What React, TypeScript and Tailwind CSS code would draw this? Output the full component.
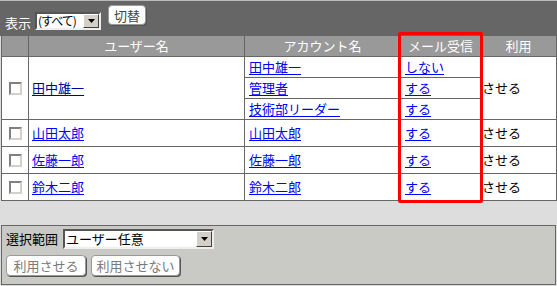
import React from "react";

const font = { fontFamily: '"Noto Sans CJK JP", "Liberation Sans", sans-serif' };

function Select({ label, className, textClass }: { label: string; className: string; textClass: string }) {
  return (
    <div
      className={`flex items-stretch bg-white border-2 border-t-[#555] border-l-[#555] border-b-[#eee] border-r-[#eee] ${className}`}
    >
      <span className={`flex-1 whitespace-nowrap pl-[1px] leading-none flex items-center text-black ${textClass}`}>
        {label}
      </span>
      <span className="w-[16px] shrink-0 bg-[#d4d0c8] border border-t-white border-l-white border-b-[#404040] border-r-[#404040] flex items-center justify-center">
        <svg width="7" height="4" viewBox="0 0 7 4">
          <path d="M0 0h7L3.5 4z" fill="#000" />
        </svg>
      </span>
    </div>
  );
}

function Btn({ children, className, gray }: { children: React.ReactNode; className: string; gray?: boolean }) {
  return (
    <button
      className={`bg-white rounded-[4px] border border-[#999] shadow-[1px_1px_0_#555] text-[13px] leading-none whitespace-nowrap flex items-center justify-center ${
        gray ? "text-[#7a7a7a]" : "text-[#444]"
      } ${className}`}
    >
      {children}
    </button>
  );
}

function Check() {
  return (
    <span className="inline-block w-[13px] h-[13px] bg-white border-2 border-t-[#808080] border-l-[#808080] border-b-[#d4d0c8] border-r-[#d4d0c8] align-middle" />
  );
}

const link = "text-[#0000ff] underline underline-offset-[2px]";

const users = [
  { name: "山田太郎" },
  { name: "佐藤一郎" },
  { name: "鈴木二郎" },
];

export default function App() {
  return (
    <div className="relative w-[557px] h-[286px] bg-[#dddddd] overflow-hidden" style={font}>
      {/* top bar */}
      <div className="h-[36px] bg-[#666666] border-t border-[#bbbbbb] flex items-start pl-[5px]">
        <span className="text-white text-[13px] leading-none mt-[15px]">表示</span>
        <Select label="(すべて)" textClass="text-[12px] tracking-[-1px]" className="w-[66px] h-[18px] mt-[11px] ml-[4px]" />
        <Btn className="w-[38px] h-[20px] mt-[4px] ml-[7px]">切替</Btn>
      </div>

      {/* table */}
      <table className="ml-[1px] w-[555px] table-fixed border-collapse text-[13px] leading-none">
        <colgroup>
          <col className="w-[27px]" />
          <col className="w-[216px]" />
          <col className="w-[156px]" />
          <col className="w-[80px]" />
          <col className="w-[76px]" />
        </colgroup>
        <thead>
          <tr className="h-[20px] bg-[#999999] text-white">
            <th className="border-x border-[#666] font-normal"></th>
            <th className="border-x border-[#666] font-normal">ユーザー名</th>
            <th className="border-x border-[#666] font-normal">アカウント名</th>
            <th className="border-x border-[#666] font-normal">メール受信</th>
            <th className="border-x border-[#666] font-normal">利用</th>
          </tr>
        </thead>
        <tbody className="bg-white">
          <tr className="h-[21px]">
            <td rowSpan={3} className="border border-[#666] text-center">
              <Check />
            </td>
            <td rowSpan={3} className="border border-[#666] pl-[3px]">
              <span className="text-[#000099] underline underline-offset-[2px]">田中雄一</span>
            </td>
            <td className="border border-[#666] pl-[4px]">
              <span className={link}>田中雄一</span>
            </td>
            <td className="border border-[#666] pl-[4px]">
              <span className={link}>しない</span>
            </td>
            <td rowSpan={3} className="border border-[#666] pl-[1px] text-black">
              させる
            </td>
          </tr>
          <tr className="h-[21px]">
            <td className="border border-[#666] pl-[4px]">
              <span className={link}>管理者</span>
            </td>
            <td className="border border-[#666] pl-[4px]">
              <span className={link}>する</span>
            </td>
          </tr>
          <tr className="h-[21px]">
            <td className="border border-[#666] pl-[4px]">
              <span className={link}>技術部リーダー</span>
            </td>
            <td className="border border-[#666] pl-[4px]">
              <span className={link}>する</span>
            </td>
          </tr>
          {users.map((u) => (
            <tr key={u.name} className="h-[27px]">
              <td className="border border-[#666] text-center">
                <Check />
              </td>
              <td className="border border-[#666] pl-[3px]">
                <span className={link}>{u.name}</span>
              </td>
              <td className="border border-[#666] pl-[4px]">
                <span className={link}>{u.name}</span>
              </td>
              <td className="border border-[#666] pl-[4px]">
                <span className={link}>する</span>
              </td>
              <td className="border border-[#666] pl-[1px] text-black">させる</td>
            </tr>
          ))}
        </tbody>
      </table>

      {/* bottom panel */}
      <div className="mt-[24px] ml-[1px] w-[555px] h-[60px] bg-[#c9cac5] border border-[#666] pl-[4px] pt-[3px] flex flex-col gap-[6px]">
        <div className="flex items-center">
          <span className="text-[13px] leading-none text-black">選択範囲</span>
          <Select label="ユーザー任意" textClass="text-[13px]" className="w-[151px] h-[20px] ml-[5px]" />
        </div>
        <div className="flex gap-[5px]">
          <Btn gray className="w-[80px] h-[21px]">利用させる</Btn>
          <Btn gray className="w-[89px] h-[21px]">利用させない</Btn>
        </div>
      </div>

      {/* highlight */}
      <div className="absolute left-[398px] top-[32px] w-[85px] h-[171px] border-[3px] border-[#ff0000] rounded-[2px] pointer-events-none" />
    </div>
  );
}
